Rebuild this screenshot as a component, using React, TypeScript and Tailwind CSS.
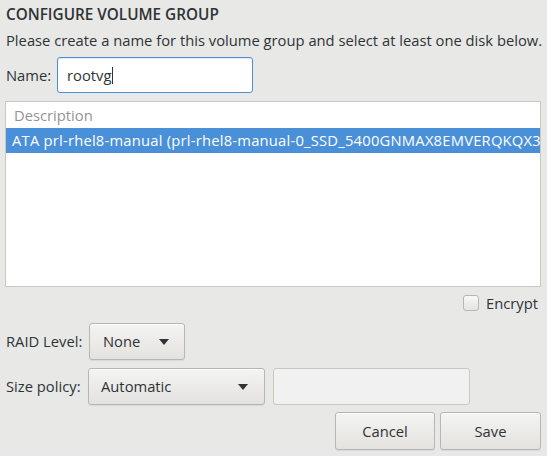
const font = { fontFamily: '"Open Sans", "Noto Sans", sans-serif' };

function Arrow() {
  return (
    <svg width="10" height="6" viewBox="0 0 10 6" aria-hidden>
      <path d="M0 0h10L5 6z" fill="#2e3436" />
    </svg>
  );
}

const btn =
  "flex items-center rounded-[3px] border border-[#b6b6b3] bg-gradient-to-b from-[#f4f4f2] to-[#e4e2df] shadow-[0_1px_0_rgba(255,255,255,0.8)_inset,0_1px_1px_rgba(0,0,0,0.07)] text-[#2e3436]";

export default function App() {
  return (
    <div
      className="flex h-[456px] w-[547px] flex-col bg-[#e8e8e7] pl-[5px] pr-[6px] text-[14.75px] text-[#2e3436]"
      style={font}
    >
      <h1 className="mt-[5px] pl-[1px] text-[15.3px] font-semibold leading-[18px]">
        CONFIGURE VOLUME GROUP
      </h1>
      <p className="mt-[8px] pl-[1px] leading-[18px] whitespace-nowrap">
        Please create a name for this volume group and select at least one disk below.
      </p>

      <div className="mt-[8px] flex h-[36px] items-center">
        <span className="w-[52px] pl-[1px]">Name:</span>
        <div className="flex h-[36px] w-[196px] items-center rounded-[3px] border border-[#4a90d9] bg-white pl-[9px] shadow-[inset_0_1px_1px_rgba(0,0,0,0.1)]">
          <span>rootvg</span>
          <span className="ml-[1px] h-[17px] w-px bg-[#2e3436]" />
        </div>
      </div>

      <div className="mt-[8px] flex h-[186px] w-[536px] flex-col overflow-hidden border border-[#cdc7c2] bg-white">
        <div className="flex h-[26px] items-center pl-[8px] text-[#929595]">Description</div>
        <div className="flex h-[25px] items-center overflow-hidden whitespace-nowrap bg-[#4a90d9] pl-[6px] tracking-[0.22px] text-white">
          ATA prl-rhel8-manual (prl-rhel8-manual-0_SSD_5400GNMAX8EMVERQKQX3)
        </div>
      </div>

      <div className="mt-[7px] flex h-[18px] items-center justify-end gap-[7px] pr-[3px]">
        <span className="h-[16px] w-[16px] rounded-[3px] border border-[#b6b6b3] bg-gradient-to-b from-[#f8f8f7] to-[#e6e4e1]" />
        <span>Encrypt</span>
      </div>

      <div className="mt-[11px] flex h-[37px] items-center">
        <span className="w-[84px] pl-[1px]">RAID Level:</span>
        <div className={`${btn} h-[37px] w-[96px] justify-between pl-[13px] pr-[15px]`}>
          <span>None</span>
          <Arrow />
        </div>
      </div>

      <div className="mt-[8px] flex h-[37px] items-center">
        <span className="w-[83px] pl-[1px]">Size policy:</span>
        <div className={`${btn} h-[37px] w-[177px] justify-between pl-[12px] pr-[16px]`}>
          <span>Automatic</span>
          <Arrow />
        </div>
        <div className="ml-[8px] h-[37px] w-[197px] rounded-[3px] border border-[#cdc7c2] bg-[#f1f1f1]" />
      </div>

      <div className="mt-[7px] flex justify-end gap-[5px]">
        <div className={`${btn} h-[38px] w-[100px] justify-center`}>Cancel</div>
        <div className={`${btn} h-[38px] w-[101px] justify-center`}>Save</div>
      </div>
    </div>
  );
}
